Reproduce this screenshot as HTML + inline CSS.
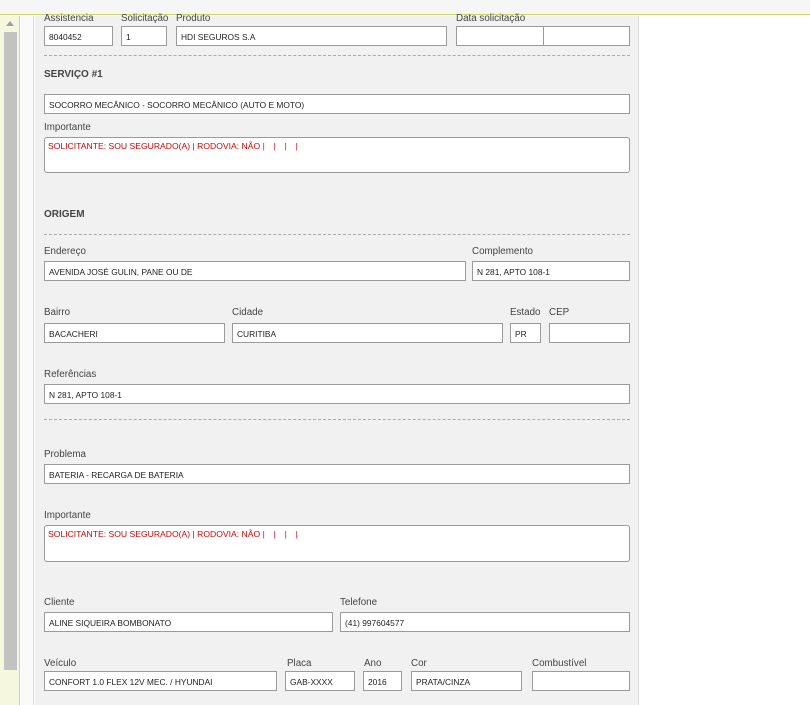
<!DOCTYPE html>
<html><head><meta charset="utf-8"><style>
*{margin:0;padding:0;box-sizing:border-box}
body{width:810px;height:705px;overflow:hidden;background:#fff;position:relative;font-family:"Liberation Sans",Arial,sans-serif;font-size:10px;color:#333}
.a{position:absolute}
.top{left:0;top:0;width:810px;height:15px;background:#f6f6f6;border-bottom:1px solid #c8d46a}
.ls{left:0;top:16px;width:20px;height:689px;background:#f5f7de;border-right:1px solid #ccc}
.sb{left:4px;top:32px;width:13px;height:638px;background:#c2c2c2}
.ar{left:6px;top:21px;width:0;height:0;border-left:4px solid transparent;border-right:4px solid transparent;border-bottom:5px solid #a0a0a0}
.gap{left:21px;top:16px;width:13px;height:689px;background:#f9f9f9;border-right:1px solid #ddd}
.pn{left:35px;top:16px;width:604px;height:689px;background:#f1f1f1;border-right:1px solid #ddd}
.l{font-size:9.8px;color:#444;white-space:nowrap}
.i{background:#fff;border:1px solid #9a9a9a;height:20px;font-size:8.4px;padding:5px 0 0 4px;color:#222;white-space:nowrap;overflow:hidden}
.t{background:#fff;border:1px solid #9a9a9a;border-radius:3px;font-size:8.6px;padding:3px 0 0 3px;color:#d00;white-space:nowrap}
.t b{font-weight:normal;display:inline-block;width:11px;text-align:left}
.d{left:44px;width:586px;border-top:1px dashed #aaa;height:0}
.h{font-weight:bold;font-size:10px;color:#444}
</style></head><body>
<div class="a top"></div>
<div class="a ls"></div><div class="a sb"></div><div class="a ar"></div>
<div class="a gap"></div>
<div class="a pn"></div>

<div class="a l" style="left:44px;top:13px">Assistencia</div>
<div class="a l" style="left:121px;top:13px">Solicitação</div>
<div class="a l" style="left:176px;top:13px">Produto</div>
<div class="a l" style="left:456px;top:13px">Data solicitação</div>
<div class="a i" style="left:44px;top:26px;width:69px">8040452</div>
<div class="a i" style="left:121px;top:26px;width:46px">1</div>
<div class="a i" style="left:176px;top:26px;width:271px">HDI SEGUROS S.A</div>
<div class="a i" style="left:456px;top:26px;width:88px"></div>
<div class="a i" style="left:543px;top:26px;width:87px"></div>
<div class="a d" style="top:55px"></div>
<div class="a h" style="left:44px;top:69px">SERVIÇO #1</div>
<div class="a i" style="left:44px;top:94px;width:586px">SOCORRO MECÂNICO - SOCORRO MECÂNICO (AUTO E MOTO)</div>
<div class="a l" style="left:44px;top:122px">Importante</div>
<div class="a t" style="left:44px;top:137px;width:586px;height:36px">SOLICITANTE: SOU SEGURADO(A) | RODOVIA: NÃO <b>|</b><b>|</b><b>|</b><b>|</b></div>
<div class="a h" style="left:44px;top:209px">ORIGEM</div>
<div class="a d" style="top:234px"></div>
<div class="a l" style="left:44px;top:246px">Endereço</div>
<div class="a l" style="left:472px;top:246px">Complemento</div>
<div class="a i" style="left:44px;top:261px;width:422px">AVENIDA JOSÉ GULIN, PANE OU DE</div>
<div class="a i" style="left:472px;top:261px;width:158px">N 281, APTO 108-1</div>
<div class="a l" style="left:44px;top:307px">Bairro</div>
<div class="a l" style="left:232px;top:307px">Cidade</div>
<div class="a l" style="left:510px;top:307px">Estado</div>
<div class="a l" style="left:549px;top:307px">CEP</div>
<div class="a i" style="left:44px;top:323px;width:181px">BACACHERI</div>
<div class="a i" style="left:232px;top:323px;width:271px">CURITIBA</div>
<div class="a i" style="left:510px;top:323px;width:31px">PR</div>
<div class="a i" style="left:549px;top:323px;width:81px"></div>
<div class="a l" style="left:44px;top:369px">Referências</div>
<div class="a i" style="left:44px;top:384px;width:586px">N 281, APTO 108-1</div>
<div class="a d" style="top:419px"></div>
<div class="a l" style="left:44px;top:449px">Problema</div>
<div class="a i" style="left:44px;top:464px;width:586px">BATERIA - RECARGA DE BATERIA</div>
<div class="a l" style="left:44px;top:510px">Importante</div>
<div class="a t" style="left:44px;top:525px;width:586px;height:37px">SOLICITANTE: SOU SEGURADO(A) | RODOVIA: NÃO <b>|</b><b>|</b><b>|</b><b>|</b></div>
<div class="a l" style="left:44px;top:597px">Cliente</div>
<div class="a l" style="left:340px;top:597px">Telefone</div>
<div class="a i" style="left:44px;top:612px;width:289px">ALINE SIQUEIRA BOMBONATO</div>
<div class="a i" style="left:340px;top:612px;width:290px">(41) 997604577</div>
<div class="a l" style="left:44px;top:658px">Veículo</div>
<div class="a l" style="left:287px;top:658px">Placa</div>
<div class="a l" style="left:364px;top:658px">Ano</div>
<div class="a l" style="left:411px;top:658px">Cor</div>
<div class="a l" style="left:532px;top:658px">Combustível</div>
<div class="a i" style="left:44px;top:671px;width:233px">CONFORT 1.0 FLEX 12V MEC. / HYUNDAI</div>
<div class="a i" style="left:285px;top:671px;width:70px">GAB-XXXX</div>
<div class="a i" style="left:363px;top:671px;width:39px">2016</div>
<div class="a i" style="left:411px;top:671px;width:111px">PRATA/CINZA</div>
<div class="a i" style="left:532px;top:671px;width:98px"></div>
</body></html>
